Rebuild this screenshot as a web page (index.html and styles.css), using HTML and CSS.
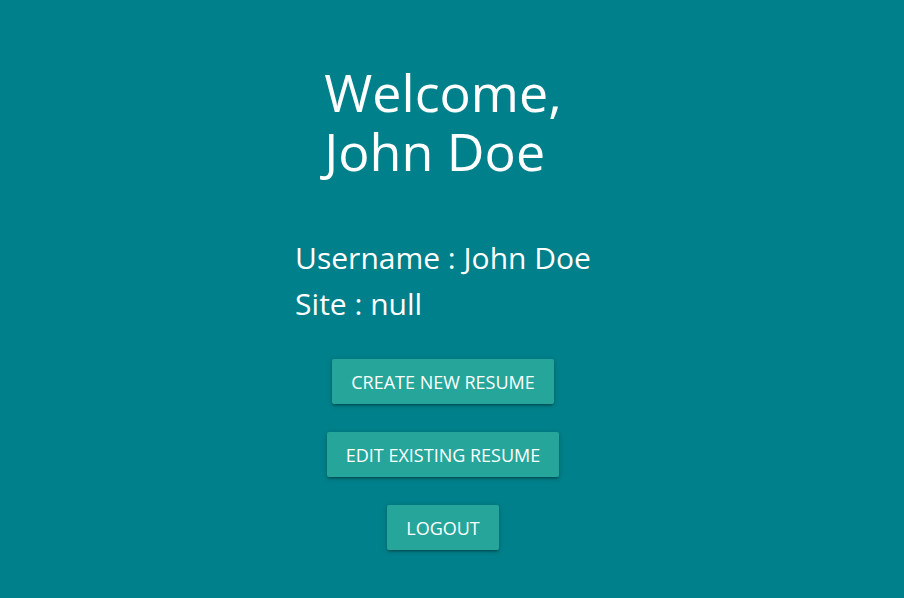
FILE: index.html
```html
<!DOCTYPE html>
<html>
<head>
<meta charset="utf-8">
<link rel="stylesheet" href="styles.css">
</head>
<body>
<main class="page">
  <h1 class="title">Welcome,<br>John Doe</h1>
  <div class="info">
    <p class="info-line">Username : John Doe</p>
    <p class="info-line">Site : null</p>
  </div>
  <div class="actions">
    <button class="btn">CREATE NEW RESUME</button>
    <button class="btn">EDIT EXISTING RESUME</button>
    <button class="btn">LOGOUT</button>
  </div>
</main>
</body>
</html>
```
FILE: styles.css
```css
html, body {
  margin: 0;
  padding: 0;
  height: 100%;
}
body {
  background: #00808a;
  color: #ffffff;
  font-family: "Open Sans", "Noto Sans", sans-serif;
}
.page {
  display: flex;
  flex-direction: column;
  align-items: center;
  padding: 62px 18px 0 0;
}
.title {
  margin: 0;
  font-weight: 400;
  font-size: 52px;
  line-height: 59px;
  text-align: left;
}
.info {
  margin-top: 55px;
}
.info-line {
  margin: 0;
  font-size: 30px;
  line-height: 46px;
}
.actions {
  margin-top: 32px;
  display: flex;
  flex-direction: column;
  align-items: center;
  gap: 28px;
}
.btn {
  background: #26a69a;
  color: #ffffff;
  border: none;
  border-radius: 2px;
  height: 45px;
  padding: 0 19px;
  font-family: inherit;
  font-size: 18px;
  box-shadow: 0 2px 2px 0 rgba(0,0,0,0.14), 0 3px 1px -2px rgba(0,0,0,0.12), 0 1px 5px 0 rgba(0,0,0,0.2);
}
```
